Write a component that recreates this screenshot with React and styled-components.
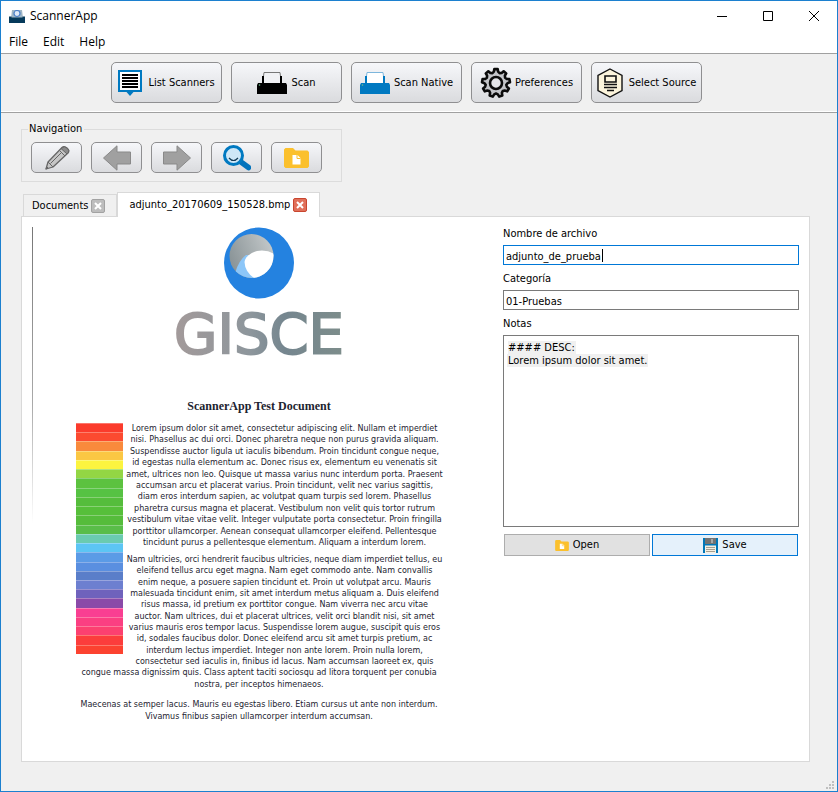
import React from "react";
import styled, { createGlobalStyle, css } from "styled-components";

const uiFont = '"DejaVu Sans Condensed", "Noto Sans", sans-serif';
const titleFont = '"Open Sans", "Noto Sans", sans-serif';

const GlobalStyle = createGlobalStyle`
  *, *::before, *::after { box-sizing: border-box; }
  body { margin: 0; background: #f0f0f0; }
  button, input, textarea { font: inherit; color: inherit; }
`;

const Window = styled.div`
  display: flex;
  flex-direction: column;
  min-height: 100vh;
  border: 1px solid #1c80cf;
  background: #f0f0f0;
  color: #000;
  font: 11px/14px ${uiFont};
`;

const TitleBar = styled.header`
  display: flex;
  align-items: center;
  height: 30px;
  padding-left: 8px;
  background: #fff;
  font: 12px/16px ${titleFont};
`;

const WindowTitle = styled.span`
  flex: 1;
  padding-left: 5px;
`;

const CaptionButton = styled.button`
  display: grid;
  place-items: center;
  width: 46px;
  height: 28px;
  padding: 0;
  border: 0;
  background: none;
`;

const MenuBar = styled.nav`
  display: flex;
  gap: 15px;
  height: 23px;
  padding: 3px 8px 0;
  background: #fff;
  border-bottom: 1px solid #a0a0a0;
  font: 12px/16px ${titleFont};
`;

const MenuItem = styled.button`
  height: 16px;
  padding: 0;
  border: 0;
  background: none;
`;

const Toolbar = styled.div`
  display: flex;
  flex-wrap: wrap;
  gap: 9px;
  padding: 8px 8px 9px 110px;
  border-bottom: 1px solid #a0a0a0;
  box-shadow: inset 0 -1px #fff;
`;

const RaisedButton = styled.button`
  display: flex;
  align-items: center;
  justify-content: center;
  padding: 0;
  border: 1px solid #8f8f91;
  border-radius: 5px;
  background: linear-gradient(#f6f7fa, #dadbde);
  white-space: nowrap;
`;

const ToolButton = styled(RaisedButton)`
  gap: ${(p) => p.$gap}px;
  width: 111px;
  height: 41px;
`;

const NavButton = styled(RaisedButton)`
  width: 51px;
  height: 31px;
`;

const Main = styled.main`
  display: flex;
  flex: 1;
  flex-direction: column;
  padding: 9px 27px 0 20px;
`;

const NavGroup = styled.fieldset`
  display: flex;
  align-self: flex-start;
  gap: 9px;
  min-width: 0;
  margin: 0;
  padding: 6px 19px 8px 9px;
  border: 1px solid #dcdcdc;
`;

const NavLegend = styled.legend`
  margin-left: -3px;
  padding: 0 2px 0 1px;
`;

const TabList = styled.div`
  display: flex;
  align-items: flex-end;
  margin-top: 10px;
  padding-left: 2px;
`;

const Tab = styled.div`
  display: flex;
  align-items: center;
  gap: 3px;
  height: 22px;
  padding: 0 11px 0 8px;
  border: 1px solid #d9d9d9;
  border-bottom: 0;
  ${(p) =>
    p.$active &&
    css`
      height: 25px;
      margin-bottom: -1px;
      padding: 0 12px 0 11px;
      background: #fff;
      z-index: 1;
    `}
`;

const TabLabel = styled.button`
  padding: 0;
  border: 0;
  background: none;
`;

const TabClose = styled.button`
  display: grid;
  place-items: center;
  width: 14px;
  height: 14px;
  padding: 0;
  border: 1px solid ${(p) => (p.$active ? "#c9452f" : "#a2a2a2")};
  border-radius: 2px;
  background: ${(p) => (p.$active ? "#e0705a" : "#bdbdbd")};
`;

const Pane = styled.section`
  display: grid;
  grid-template-columns: minmax(0, 471fr) minmax(0, 296fr);
  flex: 1;
  padding: 10px;
  background: #fff;
  border: 1px solid #d9d9d9;
`;

const Scan = styled.article`
  display: flex;
  flex-direction: column;
  align-items: flex-start;
  padding-left: 40px;
  background: linear-gradient(#777, #aaa 60%, #fff) left top / 1px 296px no-repeat;
  color: #1d2430;
  font: 8px/11px "DejaVu Sans", sans-serif;
`;

const ScanSheet = styled.div`
  display: flex;
  flex-direction: column;
  align-items: center;
  width: 374px;
`;

const WordMark = styled.div`
  margin-top: 3px;
  background: linear-gradient(90deg, #a39a9a, #8d969c 45%, #75868f 65%, #7d8d8b);
  background-clip: text;
  color: transparent;
  -webkit-text-stroke: 2px transparent;
  font: 56px/64px "DejaVu Sans", sans-serif;
`;

const ScanTitle = styled.h1`
  margin: 33px 0 0;
  font: bold 12px/14px "Liberation Serif", serif;
`;

const Body = styled.div`
  display: grid;
  grid-template-columns: 47px 1fr;
  align-items: start;
  width: 100%;
  margin-top: 10px;
  padding-left: 4px;
`;

const Spectrum = styled.div`
  display: flex;
  flex-direction: column;
  height: 231px;
`;

const Stripe = styled.div`
  flex: 1;
  background: ${(p) => p.$color};
  border-top: 1px solid rgba(255, 255, 255, 0.3);
`;

const Paragraph = styled.p`
  display: flex;
  flex-direction: column;
  align-items: center;
  justify-content: space-between;
  min-height: ${(p) => p.$height}px;
  margin: 0 0 ${(p) => p.$after || 0}px;
  white-space: nowrap;
`;

const Form = styled.form`
  display: flex;
  flex-direction: column;
`;

const FieldLabel = styled.label`
  height: 18px;
`;

const fieldBox = css`
  width: 100%;
  border: 1px solid ${(p) => (p.$active ? "#0078d7" : "#7a7a7a")};
  border-radius: 0;
  outline: 0;
`;

const TextField = styled.input`
  ${fieldBox}
  height: 20px;
  margin-bottom: 7px;
  padding: 2px 2px 0;
  background: #fff;
  ${(p) =>
    p.$active &&
    css`
      caret-color: transparent;
      background: linear-gradient(#000, #000) 98px 3px / 1px 13px no-repeat #fff;
    `}
`;

const Notes = styled.textarea`
  ${fieldBox}
  height: 192px;
  padding: 5px 4px;
  resize: none;
  line-height: 13px;
  background:
    linear-gradient(#f0f0f0, #f0f0f0) 4px 5px / 68px 13px no-repeat,
    linear-gradient(#f0f0f0, #f0f0f0) 3px 18px / 141px 13px no-repeat,
    #fff;
`;

const Actions = styled.div`
  display: grid;
  grid-template-columns: 1fr 1fr;
  gap: 2px;
  padding: 7px 1px 0;
`;

const ActionButton = styled.button`
  display: flex;
  align-items: center;
  justify-content: center;
  gap: 4px;
  height: 22px;
  padding: 0;
  border: 1px solid ${(p) => (p.$primary ? "#0078d7" : "#adadad")};
  background: ${(p) => (p.$primary ? "#e5f1fb" : "#e1e1e1")};
`;

const StatusBar = styled.footer`
  display: flex;
  align-items: flex-end;
  justify-content: flex-end;
  height: 29px;
  padding: 0 3px 2px;
`;

const AppIcon = () => (
  <svg width="16" height="13" viewBox="0 0 16 13" aria-hidden="true">
    <path d="M3 0h10l1 8H2z" fill="#9fb6c6" />
    <circle cx="8" cy="3.500" r="3" fill="#dfeaf8" stroke="#4c80c8" strokeWidth="1.200" />
    <path d="M0 6.500h2.500v1h11v-1H16V13H0z" fill="#063a5b" />
  </svg>
);

const ListIcon = () => (
  <svg width="24" height="26" viewBox="0 0 24 26" aria-hidden="true">
    <path d="M0 0h24v22h-8.500L12 26l-3.500-4H0z" fill="#0079c1" />
    <path d="M2 2h20v18H2z" fill="#fff" />
    <path d="M4 5h16M4 8h16M4 11h16M4 14h16M4 17h16" stroke="#000" strokeWidth="2" />
  </svg>
);

const ScannerIcon = ({ color, paper, line }) => (
  <svg width="30" height="22" viewBox="0 0 30 22" aria-hidden="true">
    <path d="M5.500 11.500 7 .5h16l1.500 11z" fill={paper} stroke={line} />
    <path d="M6 4v8M24 4v8" stroke={color} strokeWidth="2" />
    <path d="M1 11h28l1 2v9H0v-9z" fill={color} />
    <circle cx="2.500" cy="13" r=".8" fill="#6fbf8b" />
  </svg>
);

const GearIcon = () => {
  const points = [];
  const teeth = 9;
  for (let i = 0; i < teeth; i += 1) {
    [[-0.5, 10.5], [-0.27, 11.5], [-0.17, 14], [0.17, 14], [0.27, 11.5]].forEach(([o, r]) => {
      const a = ((i + o) / teeth) * Math.PI * 2 - Math.PI / 2;
      points.push(`${(16 + r * Math.cos(a)).toFixed(2)},${(16 + r * Math.sin(a)).toFixed(2)}`);
    });
  }
  return (
    <svg width="32" height="32" viewBox="0 0 32 32" fill="none" stroke="#0b0b0b" aria-hidden="true">
      <polygon points={points.join(" ")} fill="#c4c5c9" strokeWidth="2.600" strokeLinejoin="round" />
      <circle cx="16" cy="16" r="6" fill="#e4e5e9" strokeWidth="2.600" />
    </svg>
  );
};

const SourceIcon = () => (
  <svg width="26" height="30" viewBox="0 0 26 30" aria-hidden="true">
    <path d="M13 1 25 7.500v15L13 29 1 22.500v-15z" fill="#fdf5dc" stroke="#111" strokeWidth="1.400" />
    <path d="M8 8h11v6H8z" fill="none" stroke="#111" strokeWidth="1.600" />
    <path d="M7 16.500h13M7 19.500h13M10 22.500h7" stroke="#111" strokeWidth="1.300" />
  </svg>
);

const PencilIcon = () => (
  <svg width="26" height="26" viewBox="0 0 26 26" stroke="#666" strokeLinejoin="round" aria-hidden="true">
    <path d="m2 24 2-7L18 2.500Q20 .5 23 3t1 5L9 22z" fill="#c6c6c6" strokeWidth="1.300" />
    <path d="m17 3.500 6 5.500 1-1q2-2.500-1-5t-5 0z" fill="#8b8b8b" />
    <path d="m4 17 5 5M16 6l5 5M6.500 18.500 18 7M2 24l2-1-1-1z" fill="none" />
  </svg>
);

const ArrowIcon = ({ right }) => (
  <svg width="28" height="26" viewBox="0 0 28 26" fill="#a0a0a0" stroke="#898989" aria-hidden="true">
    <path
      d={
        right
          ? "M27.500 13 14 .8V7H.5v12H14v6.200z"
          : "M.5 13 14 .8V7h13.500v12H14v6.200z"
      }
    />
  </svg>
);

const SearchIcon = () => (
  <svg width="28" height="26" viewBox="0 0 28 26" aria-hidden="true">
    <path d="m17 15 1 1" stroke="#0072bc" strokeWidth="4" />
    <path d="m18 17 7.500 5.500" stroke="#0072bc" strokeWidth="5.500" strokeLinecap="round" />
    <circle cx="10.500" cy="10.500" r="9" fill="#cfe7f7" stroke="#0079c1" strokeWidth="3" />
    <path d="M6 13q4.500 5 9 0" fill="none" stroke="#143a55" strokeWidth="1.200" />
  </svg>
);

const FolderIcon = ({ width, height }) => (
  <svg width={width} height={height} viewBox="0 0 25 20" aria-hidden="true">
    <path d="M1.500 0h7.500l2.500 2.500h12L25 4v14.500L23.500 20h-22L0 18.500v-17z" fill="#fbc02d" />
    <path d="M8.500 7h5l3 3v6.500h-8z" fill="#fff" />
    <path d="M13 7v3.500h3.500" fill="none" stroke="#fbc02d" />
  </svg>
);

const FloppyIcon = () => (
  <svg width="15" height="15" viewBox="0 0 15 15" aria-hidden="true">
    <path d="M0 0h15v15H0z" fill="#0077b8" />
    <path d="M2 0h11v6H2z" fill="#737373" />
    <path d="M8 1h2v4H8z" fill="#a9a9a9" />
    <path d="M2 7.500h11V15H2z" fill="#f5efe2" />
    <path d="M3 9.500h9M3 11.500h9M3 13.500h9" stroke="#a59f91" />
  </svg>
);

const CrossIcon = () => (
  <svg width="8" height="8" viewBox="0 0 8 8" aria-hidden="true">
    <path d="m1 1 6 6M7 1 1 7" stroke="#fff" strokeWidth="2" />
  </svg>
);

const LogoMark = () => (
  <svg width="70" height="72" viewBox="0 0 70 72" aria-hidden="true">
    <defs>
      <linearGradient id="silver" x1="0" y1=".6" x2="1" y2=".2">
        <stop offset="0" stopColor="#7f8a8e" />
        <stop offset=".45" stopColor="#a9b0b2" />
        <stop offset="1" stopColor="#dfe1e2" />
      </linearGradient>
      <clipPath id="lens">
        <circle cx="27.500" cy="29" r="22" />
      </clipPath>
    </defs>
    <ellipse cx="35" cy="36" rx="35" ry="35.500" fill="#2482e0" />
    <g clipPath="url(#lens)">
      <path d="M0 0h70v72H0z" fill="url(#silver)" />
      <path d="M22 28Q15 33 11 46l6 8h24V29z" fill="#8cc6f8" />
      <path d="M52 28Q43 22 33 24 22 27 20.500 35 21 46 33 53h20z" fill="#fff" />
    </g>
  </svg>
);

const Grip = () => (
  <svg width="8" height="8" viewBox="0 0 8 8" fill="#bfbfbf" aria-hidden="true">
    <path d="M6 0h2v2H6zM3 3h2v2H3zM6 3h2v2H6zM0 6h2v2H0zM3 6h2v2H3zM6 6h2v2H6z" />
  </svg>
);

const stripes = [
  "#fb3b2c", "#fc4a30", "#f98a3c", "#fbc743", "#fcf43f", "#93d644", "#5cc23f",
  "#56c243", "#55bd3c", "#56bf3a", "#55bc3b", "#59bd49", "#6acbb0", "#5cc5f4",
  "#5b9be6", "#5a8fe0", "#5a7ec9", "#6d7fd0", "#6f62bc", "#8a4aa8", "#f93f92",
  "#fb3f82", "#fc4070", "#fc3d3c", "#fc4230",
];

const firstParagraph = [
  "Lorem ipsum dolor sit amet, consectetur adipiscing elit. Nullam et imperdiet",
  "nisi. Phasellus ac dui orci. Donec pharetra neque non purus gravida aliquam.",
  "Suspendisse auctor ligula ut iaculis bibendum. Proin tincidunt congue neque,",
  "id egestas nulla elementum ac. Donec risus ex, elementum eu venenatis sit",
  "amet, ultrices non leo. Quisque ut massa varius nunc interdum porta. Praesent",
  "accumsan arcu et placerat varius. Proin tincidunt, velit nec varius sagittis,",
  "diam eros interdum sapien, ac volutpat quam turpis sed lorem. Phasellus",
  "pharetra cursus magna et placerat. Vestibulum non velit quis tortor rutrum",
  "vestibulum vitae vitae velit. Integer vulputate porta consectetur. Proin fringilla",
  "porttitor ullamcorper. Aenean consequat ullamcorper eleifend. Pellentesque",
  "tincidunt purus a pellentesque elementum. Aliquam a interdum lorem.",
];

const secondParagraph = [
  "Nam ultricies, orci hendrerit faucibus ultricies, neque diam imperdiet tellus, eu",
  "eleifend tellus arcu eget magna. Nam eget commodo ante. Nam convallis",
  "enim neque, a posuere sapien tincidunt et. Proin ut volutpat arcu. Mauris",
  "malesuada tincidunt enim, sit amet interdum metus aliquam a. Duis eleifend",
  "risus massa, id pretium ex porttitor congue. Nam viverra nec arcu vitae",
  "auctor. Nam ultrices, dui et placerat ultrices, velit orci blandit nisi, sit amet",
  "varius mauris eros tempor lacus. Suspendisse lorem augue, suscipit quis eros",
  "id, sodales faucibus dolor. Donec eleifend arcu sit amet turpis pretium, ac",
  "interdum lectus imperdiet. Integer non ante lorem. Proin nulla lorem,",
  "consectetur sed iaculis in, finibus id lacus. Nam accumsan laoreet ex, quis",
];

const secondParagraphEnd = [
  "congue massa dignissim quis. Class aptent taciti sociosqu ad litora torquent per conubia",
  "nostra, per inceptos himenaeos.",
];

const lastParagraph = [
  "Maecenas at semper lacus. Mauris eu egestas libero. Etiam cursus ut ante non interdum.",
  "Vivamus finibus sapien ullamcorper interdum accumsan.",
];

const Lines = ({ lines, height, after }) => (
  <Paragraph $height={height} $after={after}>
    {lines.map((line) => (
      <span key={line}>{line}</span>
    ))}
  </Paragraph>
);

export default function App() {
  return (
    <>
      <GlobalStyle />
      <Window>
        <TitleBar>
          <AppIcon />
          <WindowTitle>ScannerApp</WindowTitle>
          <CaptionButton type="button" aria-label="Minimize">
            <svg width="10" height="10" aria-hidden="true"><path d="M0 5.500h10" stroke="#000" /></svg>
          </CaptionButton>
          <CaptionButton type="button" aria-label="Maximize">
            <svg width="10" height="10" aria-hidden="true"><path d="M.5.5h9v9h-9z" fill="none" stroke="#000" /></svg>
          </CaptionButton>
          <CaptionButton type="button" aria-label="Close">
            <svg width="10" height="10" aria-hidden="true"><path d="m0 0 10 10M10 0 0 10" stroke="#000" /></svg>
          </CaptionButton>
        </TitleBar>
        <MenuBar aria-label="Main menu">
          <MenuItem type="button">File</MenuItem>
          <MenuItem type="button">Edit</MenuItem>
          <MenuItem type="button">Help</MenuItem>
        </MenuBar>
        <Toolbar role="toolbar" aria-label="Scanner">
          <ToolButton type="button" $gap={6}><ListIcon />List Scanners</ToolButton>
          <ToolButton type="button" $gap={4}>
            <ScannerIcon color="#000" paper="#f0f1f4" line="#777" />Scan
          </ToolButton>
          <ToolButton type="button" $gap={4}>
            <ScannerIcon color="#0079c1" paper="#fff" line="#7db6dc" />Scan Native
          </ToolButton>
          <ToolButton type="button" $gap={3}><GearIcon />Preferences</ToolButton>
          <ToolButton type="button" $gap={6}><SourceIcon />Select Source</ToolButton>
        </Toolbar>
        <Main>
          <NavGroup>
            <NavLegend>Navigation</NavLegend>
            <NavButton type="button" aria-label="Edit document"><PencilIcon /></NavButton>
            <NavButton type="button" aria-label="Previous"><ArrowIcon /></NavButton>
            <NavButton type="button" aria-label="Next"><ArrowIcon right /></NavButton>
            <NavButton type="button" aria-label="Zoom"><SearchIcon /></NavButton>
            <NavButton type="button" aria-label="Open file"><FolderIcon width={25} height={20} /></NavButton>
          </NavGroup>
          <TabList>
            <Tab>
              <TabLabel type="button">Documents</TabLabel>
              <TabClose type="button" aria-label="Close Documents"><CrossIcon /></TabClose>
            </Tab>
            <Tab $active>
              <TabLabel type="button">adjunto_20170609_150528.bmp</TabLabel>
              <TabClose type="button" $active aria-label="Close adjunto_20170609_150528.bmp">
                <CrossIcon />
              </TabClose>
            </Tab>
          </TabList>
          <Pane>
            <Scan>
              <ScanSheet>
                <LogoMark />
                <WordMark>GISCE</WordMark>
                <ScanTitle>ScannerApp Test Document</ScanTitle>
                <Body>
                  <Spectrum>
                    {stripes.map((color) => <Stripe key={color} $color={color} />)}
                  </Spectrum>
                  <div>
                    <Lines lines={firstParagraph} height={125} after={6} />
                    <Lines lines={secondParagraph} height={113} />
                  </div>
                </Body>
                <Lines lines={secondParagraphEnd} height={23} after={9} />
                <Lines lines={lastParagraph} height={23} />
              </ScanSheet>
            </Scan>
            <Form>
              <FieldLabel htmlFor="filename">Nombre de archivo</FieldLabel>
              <TextField id="filename" $active autoFocus defaultValue="adjunto_de_prueba" />
              <FieldLabel htmlFor="category">Categoría</FieldLabel>
              <TextField id="category" defaultValue="01-Pruebas" />
              <FieldLabel htmlFor="notes">Notas</FieldLabel>
              <Notes id="notes" spellCheck={false} defaultValue={"#### DESC:\nLorem ipsum dolor sit amet."} />
              <Actions>
                <ActionButton type="button"><FolderIcon width={14} height={11} />Open</ActionButton>
                <ActionButton type="button" $primary><FloppyIcon />Save</ActionButton>
              </Actions>
            </Form>
          </Pane>
        </Main>
        <StatusBar><Grip /></StatusBar>
      </Window>
    </>
  );
}
